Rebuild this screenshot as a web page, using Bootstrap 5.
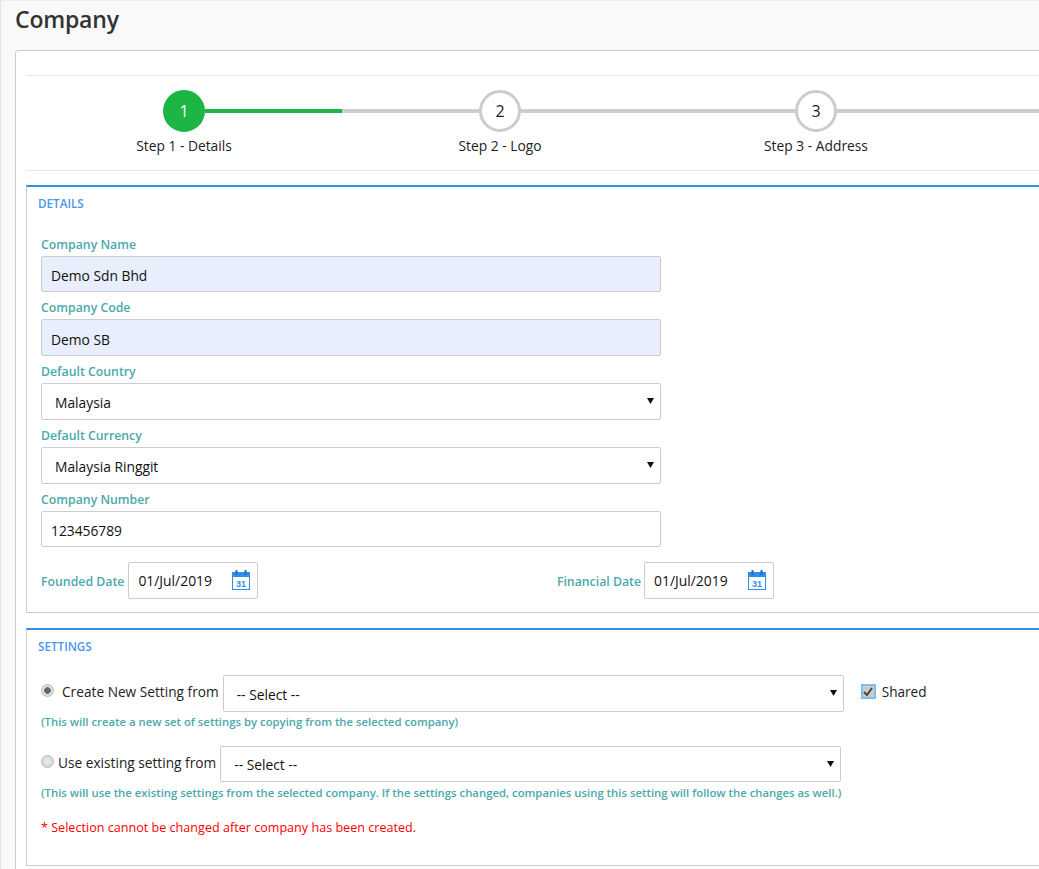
<!DOCTYPE html>
<html lang="en">
<head>
<meta charset="utf-8">
<title>Company</title>
<link rel="stylesheet" href="https://cdn.jsdelivr.net/npm/bootstrap@5.3.0/dist/css/bootstrap.min.css">
<style>
html,body{height:869px;overflow:hidden}
body{background:#f9f9f9;font-family:"Open Sans","Noto Sans",sans-serif;font-size:13.8px;color:#222;border-top:1px solid #eee;border-left:1px solid #e4e4e4}
.page-title{font-size:23px;font-weight:600;color:#333;line-height:30px;margin:3px 0 16px 14px;letter-spacing:-.2px}
.main-box{width:1400px;height:900px;margin-left:14px;background:#fff;border:1px solid #ccc;border-radius:3px;padding:24px 10px 0}
.rule-line{border-top:1px solid #e6e6e6}
.step-wrap{width:1264px;height:94px;padding-top:14px}
.step-item{width:316px}
.step-line{flex:1;height:4px;background:#ccc}
.step-line.done{background:#1db645}
.step-line.blank{background:transparent}
.step-dot{width:42px;height:42px;border-radius:50%;border:3px solid #ccc;font-size:16px;color:#222;background:#fff}
.step-dot.active{background:#1db645;border-color:#1db645;color:#fff}
.step-name{line-height:20px;margin-top:4px;color:#222}
.step-tail{height:42px}
.panel-box{border:1px solid #ccc;border-top:2px solid #2f8fe8;width:1300px;padding:0 14px}
.panel-one{margin-top:14px;height:428px}
.panel-two{margin-top:15px;height:238px}
.panel-title{color:#4a97ee;font-size:11.7px;line-height:18px;padding-top:7px;margin:0 0 0 -3px;font-weight:600}
.fld-label{display:block;color:#4ba8ac;font-size:12.3px;font-weight:600;line-height:20px;margin:0 0 1px}
.fld-group{width:620px;margin-bottom:6px}
.form-control.fld-input,.form-select.fld-input{height:36.8px;border:1px solid #ccc;border-radius:2px;font-size:13.8px;color:#111;padding:3px 9px 0;box-shadow:none}
.form-control.filled{background:#e8eefb}
.form-select.fld-input{padding-left:13px;padding-top:4px;background-image:url("data:image/svg+xml,%3Csvg xmlns='http://www.w3.org/2000/svg' width='7' height='6'%3E%3Cpath d='M0 0h7L3.500 6z' fill='%23111'/%3E%3C/svg%3E");background-position:right 6px center;background-size:7px 6px}
.form-select.fld-input.select-one{width:621px;padding-top:3px}
.first-fields{padding-top:22.500px}
.date-row{margin-top:14.500px;width:733px}
.date-label{color:#4ba8ac;font-size:12.3px;font-weight:600;margin-right:3px;white-space:nowrap;padding-top:3px}
.date-box{width:130px;height:37px;border:1px solid #ccc;border-radius:2px;padding:0 7px 0 9px;color:#111;font-size:13.9px}
.date-box span{padding-top:2px}
.radio-mark{appearance:none;width:13px;height:13px;border-radius:50%;border:1px solid #bbb;background:radial-gradient(circle,#eee,#ccc);flex:none;margin:0 0 6px}
.radio-mark:checked{background:radial-gradient(circle,#666 0 3px,#ddd 3.5px)}
.check-mark{appearance:none;width:15px;height:15px;flex:none;margin:0 0 3px;border:2px solid #7cc1ea;background:#ccc url("data:image/svg+xml,%3Csvg xmlns='http://www.w3.org/2000/svg' width='10' height='10'%3E%3Cpath d='M1 5l3 3 5-7' fill='none' stroke='%23444' stroke-width='2'/%3E%3C/svg%3E") center no-repeat}
.hint-text{color:#4ba8ac;font-size:11.34px;font-weight:600;line-height:16px;margin-top:2px}
.hint-low{margin-top:3px}
.alert-text{color:#f00;font-size:12.6px;font-weight:400;line-height:18px;margin-top:18px}
.set-row{width:900px}
.row-a{margin-top:20px;height:37px}
.row-b{margin-top:16px;height:36px}
.radio-text{color:#222;margin-bottom:3px;white-space:nowrap;font-size:13.7px}
.row-b .radio-text{margin-bottom:1px}
.shared-wrap{margin-left:17px;gap:6px}
.shared-wrap span{margin-bottom:3px;font-size:13.6px}
</style>
</head>
<body>
<h1 class="page-title">Company</h1>
<div class="main-box">
  <div class="rule-line"></div>
  <div class="step-wrap d-flex">
    <div class="step-item text-center">
      <div class="d-flex align-items-center"><div class="step-line blank"></div><div class="step-dot active d-flex align-items-center justify-content-center">1</div><div class="step-line done"></div></div>
      <div class="step-name">Step 1 - Details</div>
    </div>
    <div class="step-item text-center">
      <div class="d-flex align-items-center"><div class="step-line"></div><div class="step-dot d-flex align-items-center justify-content-center">2</div><div class="step-line"></div></div>
      <div class="step-name">Step 2 - Logo</div>
    </div>
    <div class="step-item text-center">
      <div class="d-flex align-items-center"><div class="step-line"></div><div class="step-dot d-flex align-items-center justify-content-center">3</div><div class="step-line"></div></div>
      <div class="step-name">Step 3 - Address</div>
    </div>
    <div class="step-item">
      <div class="step-tail d-flex align-items-center"><div class="step-line"></div></div>
    </div>
  </div>
  <div class="rule-line"></div>

  <section class="panel-box panel-one">
    <h2 class="panel-title">DETAILS</h2>
    <div class="first-fields">
      <div class="fld-group"><label class="fld-label">Company Name</label><input class="form-control fld-input filled" value="Demo Sdn Bhd"></div>
      <div class="fld-group"><label class="fld-label">Company Code</label><input class="form-control fld-input filled" value="Demo SB"></div>
      <div class="fld-group"><label class="fld-label">Default Country</label><select class="form-select fld-input"><option>Malaysia</option></select></div>
      <div class="fld-group"><label class="fld-label">Default Currency</label><select class="form-select fld-input"><option>Malaysia Ringgit</option></select></div>
      <div class="fld-group"><label class="fld-label">Company Number</label><input class="form-control fld-input" value="123456789"></div>
    </div>
    <div class="date-row d-flex justify-content-between">
      <div class="d-flex align-items-center"><span class="date-label me-1">Founded Date</span>
        <div class="date-box d-flex align-items-center justify-content-between"><span>01/Jul/2019</span>
          <svg width="18" height="20" viewBox="0 0 18 20"><path d="M0 2h18v18H0z" fill="#2f8fe8"/><path d="M1 7h16v12H1z" fill="#fff"/><path d="M3.500 0h2v5h-2zM12.500 0h2v5h-2z" fill="#1a6fc0"/><text x="9" y="17" font-size="9" font-weight="700" text-anchor="middle" fill="#2f8fe8" font-family="Liberation Sans">31</text></svg>
        </div>
      </div>
      <div class="d-flex align-items-center"><span class="date-label">Financial Date</span>
        <div class="date-box d-flex align-items-center justify-content-between"><span>01/Jul/2019</span>
          <svg width="18" height="20" viewBox="0 0 18 20"><path d="M0 2h18v18H0z" fill="#2f8fe8"/><path d="M1 7h16v12H1z" fill="#fff"/><path d="M3.500 0h2v5h-2zM12.500 0h2v5h-2z" fill="#1a6fc0"/><text x="9" y="17" font-size="9" font-weight="700" text-anchor="middle" fill="#2f8fe8" font-family="Liberation Sans">31</text></svg>
        </div>
      </div>
    </div>
  </section>

  <section class="panel-box panel-two">
    <h2 class="panel-title">SETTINGS</h2>
    <div class="set-row row-a d-flex align-items-center">
      <input type="radio" name="mode" class="radio-mark" checked>
      <span class="radio-text ms-2 me-1">Create New Setting from</span>
      <select class="form-select fld-input select-one"><option>-- Select --</option></select>
      <div class="shared-wrap d-flex align-items-center"><input type="checkbox" class="check-mark" checked><span>Shared</span></div>
    </div>
    <div class="hint-text">(This will create a new set of settings by copying from the selected company)</div>
    <div class="set-row row-b d-flex align-items-center">
      <input type="radio" name="mode" class="radio-mark">
      <span class="radio-text ms-1 me-1">Use existing setting from</span>
      <select class="form-select fld-input select-one"><option>-- Select --</option></select>
    </div>
    <div class="hint-text hint-low">(This will use the existing settings from the selected company. If the settings changed, companies using this setting will follow the changes as well.)</div>
    <div class="alert-text">* Selection cannot be changed after company has been created.</div>
  </section>
</div>
</body>
</html>
